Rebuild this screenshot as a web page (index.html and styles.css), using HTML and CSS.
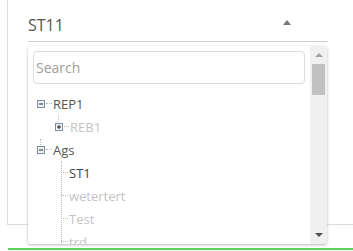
FILE: index.html
```html
<!DOCTYPE html>
<html>
<head>
<meta charset="utf-8">
<link rel="stylesheet" href="styles.css">
</head>
<body>
<div class="frame">
  <div class="field">
    <span class="value">ST11</span>
    <span class="caret"></span>
  </div>
</div>
<div class="green"></div>

<div class="dropdown">
  <div class="content">
    <div class="search-wrap"><input class="search" type="text" placeholder="Search"></div>
    <ul class="tree">
      <li class="node">
        <div class="row lvl0">
          <svg class="tog" width="8" height="8" viewBox="0 0 8 8"><rect x="0.5" y="0.5" width="7" height="7" fill="#eef0f3" stroke="#7f8ea2"/><rect x="2" y="3.5" width="4" height="1" fill="#222"/></svg>
          <span class="dash"></span><span class="label">REP1</span>
        </div>
        <div class="row lvl1">
          <span class="vstub"></span>
          <svg class="tog" width="8" height="8" viewBox="0 0 8 8"><rect x="0.5" y="0.5" width="7" height="7" fill="#eef0f3" stroke="#7f8ea2"/><rect x="2" y="3.5" width="4" height="1" fill="#222"/><rect x="3.5" y="2" width="1" height="4" fill="#222"/></svg>
          <span class="dash"></span><span class="label off">REB1</span>
        </div>
      </li>
      <li class="node">
        <div class="row lvl0">
          <span class="vstub top"></span>
          <svg class="tog" width="8" height="8" viewBox="0 0 8 8"><rect x="0.5" y="0.5" width="7" height="7" fill="#eef0f3" stroke="#7f8ea2"/><rect x="2" y="3.5" width="4" height="1" fill="#222"/></svg>
          <span class="dash"></span><span class="label">Ags</span>
        </div>
        <div class="children">
          <div class="row leaf"><span class="ldash"></span><span class="label dark">ST1</span></div>
          <div class="row leaf"><span class="ldash"></span><span class="label off">wetertert</span></div>
          <div class="row leaf"><span class="ldash"></span><span class="label off">Test</span></div>
          <div class="row leaf"><span class="ldash"></span><span class="label off">trd</span></div>
        </div>
      </li>
    </ul>
  </div>
  <div class="scrollbar">
    <span class="arrow up"></span>
    <span class="thumb"></span>
    <span class="arrow down"></span>
  </div>
</div>
</body>
</html>
```

FILE: styles.css
```css
html, body {
  margin: 0;
  padding: 0;
  background: #fff;
  font-family: "Open Sans", "DejaVu Sans", sans-serif;
  overflow: hidden;
}

.frame {
  margin-left: 7px;
  height: 225px;
  border-left: 1px solid #dcdcdc;
  border-bottom: 1px solid #dcdcdc;
  padding-left: 20px;
  padding-top: 14px;
  box-sizing: border-box;
}

.field {
  width: 300px;
  height: 28px;
  border-bottom: 1px solid #cfcfcf;
  display: flex;
  align-items: flex-start;
  justify-content: space-between;
  box-sizing: border-box;
  position: relative;
}

.value {
  font-size: 16px;
  line-height: 20px;
  color: #555;
  margin-top: 1px;
}

.caret {
  width: 0;
  height: 0;
  border-left: 4px solid transparent;
  border-right: 4px solid transparent;
  border-bottom: 5px solid #777;
  margin-top: 6px;
  margin-right: 37px;
}

.green {
  margin-top: 23px;
  margin-left: 8px;
  height: 2px;
  background: #5dd55d;
}

.dropdown {
  position: absolute;
  left: 28px;
  top: 46px;
  width: 299px;
  height: 198px;
  background: #fff;
  border-radius: 3px;
  box-shadow: 0 1px 3px rgba(0,0,0,0.28);
  display: flex;
  overflow: hidden;
}

.content {
  flex: 1;
  overflow: hidden;
}

.search-wrap {
  padding: 5px 4px 0 5px;
}

.search {
  width: 272px;
  height: 33px;
  box-sizing: border-box;
  border: 1px solid #dcdcdc;
  border-radius: 4px;
  font-family: "Open Sans", "DejaVu Sans", sans-serif;
  font-size: 14px;
  padding: 0 2px;
  color: #555;
  outline: none;
}
.search::placeholder { color: #a0a0a0; }

.tree {
  list-style: none;
  margin: 0;
  padding: 8px 0 0 9px;
}

.row {
  height: 23px;
  display: flex;
  align-items: center;
  position: relative;
  font-size: 13px;
}

.lvl1 { padding-left: 18px; }

.tog { flex: none; display: block; }

.dash {
  width: 6px;
  border-top: 1px dotted #bbb;
  margin: 0 1px;
}
.lvl1 .dash { width: 5px; }

.vstub {
  position: absolute;
  left: 21px;
  top: 0;
  height: 7px;
  border-left: 1px dotted #bbb;
}
.vstub.top { left: 3px; top: 1px; height: 6px; }

.label { color: #555; }
.label.off { color: #c4c4c4; }
.label.dark { color: #444; }

.children {
  position: relative;
  padding-left: 24px;
}
.children::before {
  content: "";
  position: absolute;
  left: 24px;
  top: 0;
  bottom: 0;
  border-left: 1px dotted #bbb;
}

.leaf .ldash {
  width: 7px;
  border-top: 1px dotted #bbb;
  margin-right: 1px;
}

.scrollbar {
  width: 17px;
  background: #f0f0f0;
  display: flex;
  flex-direction: column;
  align-items: center;
  flex: none;
}

.arrow {
  width: 0;
  height: 0;
  border-left: 4px solid transparent;
  border-right: 4px solid transparent;
}
.arrow.up {
  border-bottom: 4px solid #a3a3a3;
  margin-top: 7px;
}
.arrow.down {
  border-top: 4px solid #505050;
  margin-top: auto;
  margin-bottom: 7px;
}

.thumb {
  width: 13px;
  height: 31px;
  background: #c1c1c1;
  margin-top: 7px;
}
```
